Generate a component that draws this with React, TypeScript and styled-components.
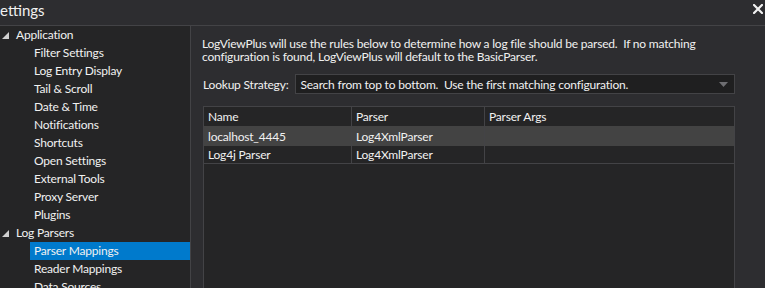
import React from "react";
import styled, { createGlobalStyle } from "styled-components";

const GlobalStyle = createGlobalStyle`
  html, body {
    margin: 0;
    padding: 0;
    background: #2d2d30;
    overflow: hidden;
  }
  body {
    font-family: Lato, "Noto Sans", sans-serif;
    font-size: 12px;
    letter-spacing: -0.2px;
    color: #f1f1f1;
  }
`;

type TreeNode = { label: string; level: number; selected?: boolean };

const tree: TreeNode[] = [
  { label: "Application", level: 0 },
  { label: "Filter Settings", level: 1 },
  { label: "Log Entry Display", level: 1 },
  { label: "Tail & Scroll", level: 1 },
  { label: "Date & Time", level: 1 },
  { label: "Notifications", level: 1 },
  { label: "Shortcuts", level: 1 },
  { label: "Open Settings", level: 1 },
  { label: "External Tools", level: 1 },
  { label: "Proxy Server", level: 1 },
  { label: "Plugins", level: 1 },
  { label: "Log Parsers", level: 0 },
  { label: "Parser Mappings", level: 1, selected: true },
  { label: "Reader Mappings", level: 1 },
  { label: "Data Sources", level: 1 },
];

const mappings = [
  { name: "localhost_4445", parser: "Log4XmlParser", args: "", highlighted: true },
  { name: "Log4j Parser", parser: "Log4XmlParser", args: "" },
];

const ExpandedArrow = () => (
  <svg width="7" height="7" viewBox="0 0 7 7">
    <polygon points="7,0 7,7 0,7" fill="#d0d0d0" />
  </svg>
);

const ComboArrow = () => (
  <svg width="9" height="5" viewBox="0 0 9 5">
    <polygon points="0,0 9,0 4.5,5" fill="#6e6e72" />
  </svg>
);

const CloseIcon = () => (
  <svg width="10" height="10" viewBox="0 0 10 10">
    <path d="M1 1L9 9M9 1L1 9" stroke="#f1f1f1" strokeWidth="2.2" strokeLinecap="square" />
  </svg>
);

export default function App() {
  return (
    <Window>
      <GlobalStyle />
      <TitleBar>
        <Title>Settings</Title>
        <CloseButton>
          <CloseIcon />
        </CloseButton>
      </TitleBar>
      <Body>
        <TreePanel>
          {tree.map((node) => (
            <TreeRow key={node.label} level={node.level}>
              {node.level === 0 && (
                <Expander>
                  <ExpandedArrow />
                </Expander>
              )}
              <TreeLabel selected={!!node.selected}>{node.label}</TreeLabel>
            </TreeRow>
          ))}
        </TreePanel>
        <Content>
          <Intro>
            <IntroLine>
              LogViewPlus will use the rules below to determine how a log file should be parsed.&nbsp; If no matching
            </IntroLine>
            <IntroLine>configuration is found, LogViewPlus will default to the BasicParser.</IntroLine>
          </Intro>
          <StrategyRow>
            <FieldLabel>Lookup Strategy:</FieldLabel>
            <Combo>
              <ComboText>Search from top to bottom.&nbsp; Use the first matching configuration.</ComboText>
              <ComboArrow />
            </Combo>
          </StrategyRow>
          <Grid>
            <HeaderRow>
              <Cell>Name</Cell>
              <Cell>Parser</Cell>
              <Cell>Parser Args</Cell>
            </HeaderRow>
            {mappings.map((m) => (
              <DataRow key={m.name} highlighted={!!m.highlighted}>
                <Cell>{m.name}</Cell>
                <Cell>{m.parser}</Cell>
                <Cell>{m.args}</Cell>
              </DataRow>
            ))}
          </Grid>
        </Content>
      </Body>
    </Window>
  );
}

const Window = styled.div`
  width: 765px;
  height: 288px;
  display: flex;
  flex-direction: column;
  background: #2d2d30;
  overflow: hidden;
`;

const TitleBar = styled.div`
  height: 25px;
  flex: 0 0 25px;
  display: flex;
  align-items: center;
  justify-content: space-between;
  border-bottom: 1px solid #434346;
`;

const Title = styled.div`
  margin-left: -8px;
  font-size: 15px;
  letter-spacing: 0;
  color: #f1f1f1;
  margin-top: -5px;
`;

const CloseButton = styled.div`
  display: flex;
  align-items: center;
  margin-right: 2px;
  margin-top: -8px;
`;

const Body = styled.div`
  flex: 1;
  display: flex;
  min-height: 0;
`;

const TreePanel = styled.div`
  width: 190px;
  flex: 0 0 190px;
  background: #252526;
  border-right: 1px solid #434346;
  display: flex;
  flex-direction: column;
`;

const TreeRow = styled.div<{ level: number }>`
  height: 18px;
  flex: 0 0 18px;
  display: flex;
  align-items: center;
  padding-left: ${({ level }) => (level === 0 ? 2 : 30)}px;
`;

const Expander = styled.span`
  width: 10px;
  display: flex;
  align-items: center;
  margin-top: 1px;
`;

const TreeLabel = styled.span<{ selected: boolean }>`
  flex: 1;
  height: 18px;
  line-height: 18px;
  padding-left: 4px;
  white-space: nowrap;
  background: ${({ selected }) => (selected ? "#007acc" : "transparent")};
  color: #f1f1f1;
`;

const Content = styled.div`
  flex: 1;
  display: flex;
  flex-direction: column;
  padding: 11px 30px 0 11px;
  min-width: 0;
`;

const Intro = styled.div`
  display: flex;
  flex-direction: column;
  margin-bottom: 11px;
`;

const IntroLine = styled.div`
  line-height: 13px;
  white-space: nowrap;
`;

const StrategyRow = styled.div`
  display: flex;
  align-items: center;
  gap: 7px;
  margin-bottom: 12px;
`;

const FieldLabel = styled.span`
  padding-left: 1px;
  white-space: nowrap;
`;

const Combo = styled.div`
  flex: 1;
  height: 18px;
  display: flex;
  align-items: center;
  justify-content: space-between;
  background: #1f1f20;
  border: 1px solid #434346;
  padding: 0 6px 0 4px;
`;

const ComboText = styled.span`
  white-space: nowrap;
`;

const Grid = styled.div`
  flex: 1;
  margin-left: 1px;
  background: #252526;
  border: 1px solid #434346;
  border-bottom: none;
  display: flex;
  flex-direction: column;
`;

const HeaderRow = styled.div`
  display: grid;
  grid-template-columns: 148px 133px 1fr;
  height: 19px;
`;

const DataRow = styled.div<{ highlighted: boolean }>`
  display: grid;
  grid-template-columns: 148px 133px 1fr;
  height: ${({ highlighted }) => (highlighted ? 20 : 17)}px;
  background: ${({ highlighted }) => (highlighted ? "#434343" : "#252526")};
  border-bottom: ${({ highlighted }) => (highlighted ? "none" : "1px solid #434346")};
`;

const Cell = styled.div`
  display: flex;
  align-items: center;
  padding-left: 4px;
  border-right: 1px solid #434346;
  white-space: nowrap;
  &:last-child {
    border-right: none;
  }
`;
